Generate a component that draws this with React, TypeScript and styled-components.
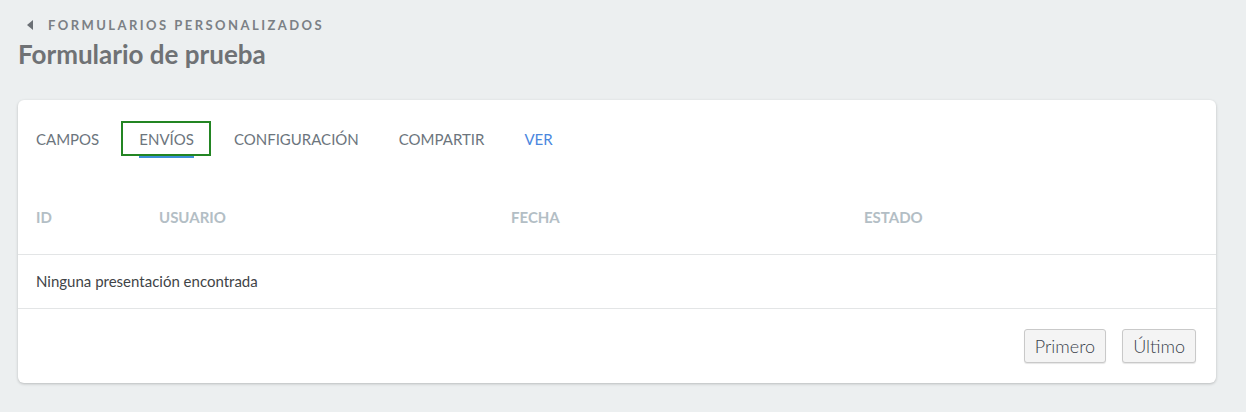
import React from "react";
import styled, { createGlobalStyle } from "styled-components";

const GlobalStyle = createGlobalStyle`
  html, body {
    margin: 0;
    padding: 0;
    background: #eceff0;
    font-family: Lato, "Open Sans", sans-serif;
  }
  * { box-sizing: border-box; }
`;

const tabs = ["CAMPOS", "ENVÍOS", "CONFIGURACIÓN", "COMPARTIR", "VER"];
const columns = [
  { label: "ID", width: 123 },
  { label: "USUARIO", width: 352 },
  { label: "FECHA", width: 353 },
  { label: "ESTADO", width: 0 },
];

export default function App() {
  return (
    <Page>
      <GlobalStyle />
      <Breadcrumb>
        <Caret viewBox="0 0 6 10">
          <path d="M6 0 L0 5 L6 10 Z" fill="currentColor" />
        </Caret>
        FORMULARIOS PERSONALIZADOS
      </Breadcrumb>
      <Title>Formulario de prueba</Title>

      <Card>
        <TabBar>
          {tabs.map((t) => (
            <Tab key={t} $active={t === "ENVÍOS"} $link={t === "VER"}>
              {t}
            </Tab>
          ))}
        </TabBar>

        <Table>
          <HeaderRow>
            {columns.map((c) => (
              <HeadCell key={c.label} $width={c.width}>
                {c.label}
              </HeadCell>
            ))}
          </HeaderRow>
          <EmptyRow>Ninguna presentación encontrada</EmptyRow>
        </Table>

        <Footer>
          <PageButton>Primero</PageButton>
          <PageButton>Último</PageButton>
        </Footer>
      </Card>
    </Page>
  );
}

const Page = styled.div`
  padding: 16px 30px 28px 18px;
`;

const Breadcrumb = styled.div`
  display: flex;
  align-items: center;
  gap: 15px;
  padding-left: 9px;
  font-size: 13px;
  font-weight: 700;
  letter-spacing: 2.45px;
  color: #7b8085;
  height: 18px;
`;

const Caret = styled.svg`
  width: 6px;
  height: 10px;
  color: #6b7075;
`;

const Title = styled.h1`
  margin: 4px 0 0;
  font-size: 26px;
  font-weight: 700;
  color: #6f7275;
  line-height: 32px;
`;

const Card = styled.div`
  margin-top: 30px;
  background: #fff;
  border-radius: 6px;
  box-shadow: 0 1px 3px rgba(0, 0, 0, 0.22);
`;

const TabBar = styled.div`
  display: flex;
  align-items: flex-start;
  padding: 21px 0 0 18px;
  height: 80px;
`;

const Tab = styled.div<{ $active?: boolean; $link?: boolean }>`
  position: relative;
  display: flex;
  align-items: center;
  height: 35px;
  padding: 0 17px 0 18px;
  margin-right: 5px;
  font-size: 15px;
  color: ${(p) => (p.$link ? "#4b87de" : "#6c757d")};
  outline: ${(p) => (p.$active ? "2px solid #238523" : "none")};
  outline-offset: -2px;
  &:first-child {
    padding-left: 0;
  }
  ${(p) =>
    p.$active &&
    `
    &::after {
      content: "";
      position: absolute;
      left: 18px;
      right: 17px;
      bottom: -2px;
      height: 2px;
      background: #3d8fd6;
    }
  `}
`;

const Table = styled.div`
  display: flex;
  flex-direction: column;
`;

const HeaderRow = styled.div`
  display: flex;
  align-items: center;
  height: 75px;
  padding-bottom: 1px;
  border-bottom: 1px solid #e3e5e6;
`;

const HeadCell = styled.div<{ $width: number }>`
  ${(p) => (p.$width ? `width: ${p.$width}px;` : "flex: 1;")}
  padding-left: 18px;
  font-size: 15px;
  font-weight: 700;
  color: #b3bec5;
`;

const EmptyRow = styled.div`
  display: flex;
  align-items: center;
  height: 54px;
  padding-left: 18px;
  padding-bottom: 1px;
  font-size: 15px;
  color: #3f4447;
  border-bottom: 1px solid #e3e5e6;
`;

const Footer = styled.div`
  display: flex;
  justify-content: flex-end;
  gap: 16px;
  padding: 20px 20px 20px;
`;

const PageButton = styled.button`
  height: 34px;
  padding: 0 10px;
  font-family: Lato, "Open Sans", sans-serif;
  font-size: 18px;
  font-weight: 300;
  color: #3a424c;
  background: #f4f4f4;
  border: 1px solid #c9c9c9;
  border-radius: 3px;
  box-shadow: 0 1px 1px rgba(0, 0, 0, 0.1);
`;
